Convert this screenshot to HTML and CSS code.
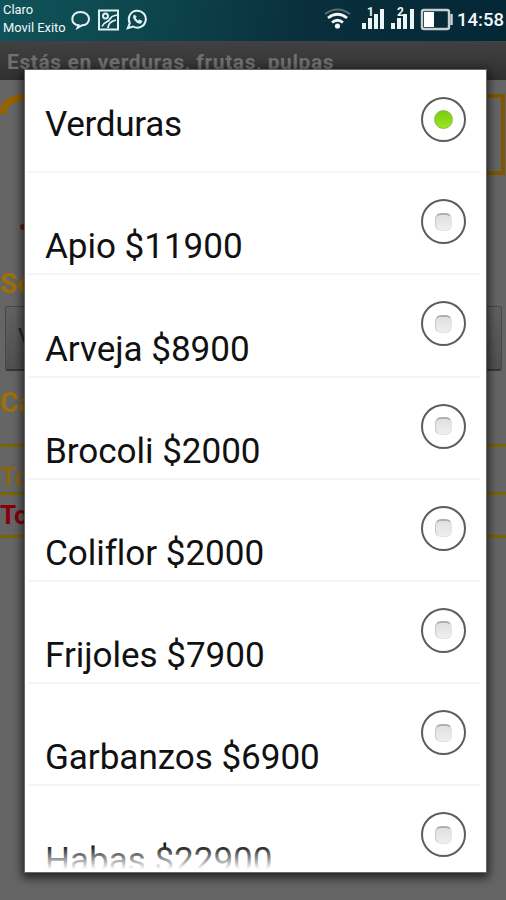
FILE: index.html
```html
<!DOCTYPE html>
<html lang="es">
<head>
<meta charset="utf-8">
<title>Verduras</title>
<link rel="stylesheet" href="styles.css">
</head>
<body>
<div class="screen">
  <header class="status">
    <div class="carrier"><span>Claro</span><span>Movil Exito</span></div>
    <svg class="notices" width="80" height="24" viewBox="0 0 80 24" fill="none" stroke="#e0f2f3" stroke-width="2">
      <path d="M7.500 17.300C2.500 16.500 1.300 13.500 1.300 11C1.300 7 4.500 4 9.500 4S18 7 18 11S14.500 17.300 11 17.300L6.500 19.800Z"/>
      <rect x="28" y="2.500" width="19" height="19"/>
      <circle cx="34.500" cy="8" r="2.500"/>
      <path d="M31 18.500C33 13 37 15 39 11S43 8 46 7M37 20C37 15 41 13 45 12" stroke-width="1.700"/>
      <path d="M58.800 15.200A8.500 8.500 0 1 1 62 18.500L56.800 20.200Z"/>
      <path d="M63.300 7C61.500 9 63.500 12.500 66 14.200S70.500 15.400 71 13.400L68.600 11.900L67.200 13C65.500 12.100 64.700 10.900 64.300 9.700L65.300 8.700Z" fill="#e0f2f3" stroke-width="1"/>
    </svg>
    <svg class="signals" width="130" height="32" viewBox="0 0 130 32" fill="none">
      <g stroke="#f3f7f8" stroke-width="2.800">
        <path d="M1 14Q13.500 5 26 14" stroke="#54717a" stroke-width="1.800"/>
        <path d="M4 18Q13.500 10.500 23 18M8 22.500Q13.500 18 19 22.500"/>
      </g>
      <circle cx="13.500" cy="26" r="2.600" fill="#f3f7f8"/>
      <g fill="#edf4f6">
        <path d="M38 23h4v6h-4zM44 18h4v11h-4zM50 14h4v15h-4zM56 9h4v20h-4zM67 23h4v6h-4zM73 18h4v11h-4zM79 14h4v15h-4zM86 9h4v20h-4z"/>
      </g>
      <text class="sim" x="43" y="16">1</text><text class="sim" x="73" y="16">2</text>
      <rect x="98" y="10" width="27" height="19" rx="2" stroke="#c5d0d3" stroke-width="2.400"/>
      <path d="M100 12h10v15h-10z" fill="#fff"/>
      <path d="M127.500 14v11" stroke="#c5d0d3" stroke-width="2.500"/>
    </svg>
    <time class="clock">14:58</time>
  </header>
  <div class="titlebar">Estás en verduras, frutas, pulpas</div>
  <main class="page">
    <div class="banner">
      <svg width="506" height="160" viewBox="0 0 506 160" fill="none">
        <path d="M3 34C3 23 12 17 30 17" stroke="#946200" stroke-width="7"/>
        <path d="M480 16h23v77h-23" stroke="#7d5700" stroke-width="4"/>
        <path d="M480 48l7-7v24h-7z" fill="#303537"/>
        <circle cx="23" cy="147" r="3" fill="#681d16"/>
      </svg>
    </div>
    <div class="field">Se</div>
    <div class="spinner">V</div>
    <div class="field quantity">Ca</div>
    <div class="total">To</div>
    <div class="total grand">To</div>
  </main>
</div>
<div class="dialog">
  <label class="option first"><span class="name">Verduras</span><span class="radio checked"></span></label>
  <label class="option"><span class="name">Apio $11900</span><span class="radio"></span></label>
  <label class="option"><span class="name">Arveja $8900</span><span class="radio"></span></label>
  <label class="option"><span class="name">Brocoli $2000</span><span class="radio"></span></label>
  <label class="option"><span class="name">Coliflor $2000</span><span class="radio"></span></label>
  <label class="option"><span class="name">Frijoles $7900</span><span class="radio"></span></label>
  <label class="option"><span class="name">Garbanzos $6900</span><span class="radio"></span></label>
  <label class="option last"><span class="name">Habas $22900</span><span class="radio"></span></label>
</div>
</body>
</html>
```
FILE: styles.css
```css
* { box-sizing: border-box; }
body { margin: 0; font-family: Roboto, "Liberation Sans", sans-serif; }
.screen { width: 506px; height: 900px; overflow: hidden; background: #656565; }
.status {
  display: flex; height: 41px; color: #f2f8f9;
  background: linear-gradient(100deg, #10535a 0%, #0d454c 30%, #092f3c 60%, #042735 100%);
}
.carrier { width: 71px; padding: 1px 0 0 3px; font-size: 12.9px; line-height: 18px; white-space: nowrap; }
.carrier span { display: block; }
.notices { margin-top: 8px; }
.signals { margin-left: 173px; flex: none; }
.sim { font: 700 12px Roboto, sans-serif; fill: #edf4f6; }
.clock { margin-left: 3px; font-size: 18.5px; line-height: 40px; font-weight: 500; }
.titlebar {
  height: 39px; padding-left: 7px; font-size: 21px; line-height: 43px; font-weight: 700;
  color: #707070; background: linear-gradient(#414141, #303030); white-space: nowrap; letter-spacing: .6px;
}
.page { display: flex; flex-direction: column; }
.banner { height: 186px; }
.banner svg { display: block; }
.field { height: 37px; color: #a07005; font-size: 28px; font-weight: 700; line-height: 36px; }
.spinner {
  height: 65px; margin: 3px 4px 0 5px; padding-left: 12px; font-size: 22px; line-height: 60px;
  color: #222; background: linear-gradient(#626262, #505050);
  border: 1px solid #484848; border-bottom: 2px solid #373737; border-radius: 3px;
}
.quantity { margin-top: 14px; height: 62px; border-bottom: 3px solid #776500; }
.total { height: 48px; padding-top: 12px; border-bottom: 3px solid #776500; color: #906506; font-size: 26px; line-height: 36px; font-weight: 500; }
.grand { height: 43px; padding-top: 2px; color: #85000b; font-weight: 700; }
.dialog {
  position: absolute; left: 25px; top: 70px; width: 461px; height: 802px; overflow: hidden;
  background: #fff; box-shadow: 0 0 0 1px #686868, 0 3px 9px 3px rgba(0,0,0,.65);
}
.dialog::after {
  content: ""; position: absolute; left: 0; right: 0; bottom: 0; height: 27px;
  background: linear-gradient(rgba(255,255,255,0), #fff 90%);
}
.option {
  display: flex; justify-content: space-between; height: 102.2px; margin: 0 6px 0 4px; padding: 0 14px 0 16px;
  border-bottom: 2px solid #f5f5f5; color: #111;
}
.first { height: 103.2px; }
.last { height: 98px; border-bottom: 0; }
.name { padding-top: 52.3px; font-size: 35.1px; line-height: 42px; white-space: nowrap; letter-spacing: -.05px; }
.first .name { padding-top: 33px; letter-spacing: -.3px; }
.radio {
  position: relative; z-index: 1;
  display: flex; flex: none; align-items: center; justify-content: center;
  width: 45px; height: 45px; margin-top: 26px; border: 2px solid #5d5d5d; border-radius: 50%;
}
.first .radio { margin-top: 27px; }
.radio::before {
  content: ""; width: 15px; height: 15px; border-radius: 6px; border: 1px solid #e4e4e4;
  border-top: 2px solid #b0b0b0; border-left-color: #c8c8c8; background: linear-gradient(#e0e0e0, #eee);
}
.checked::before { width: 17px; height: 17px; border-radius: 50%; border: 1px solid #91b94f; background: linear-gradient(#79ca10, #96ea1c); }
```
